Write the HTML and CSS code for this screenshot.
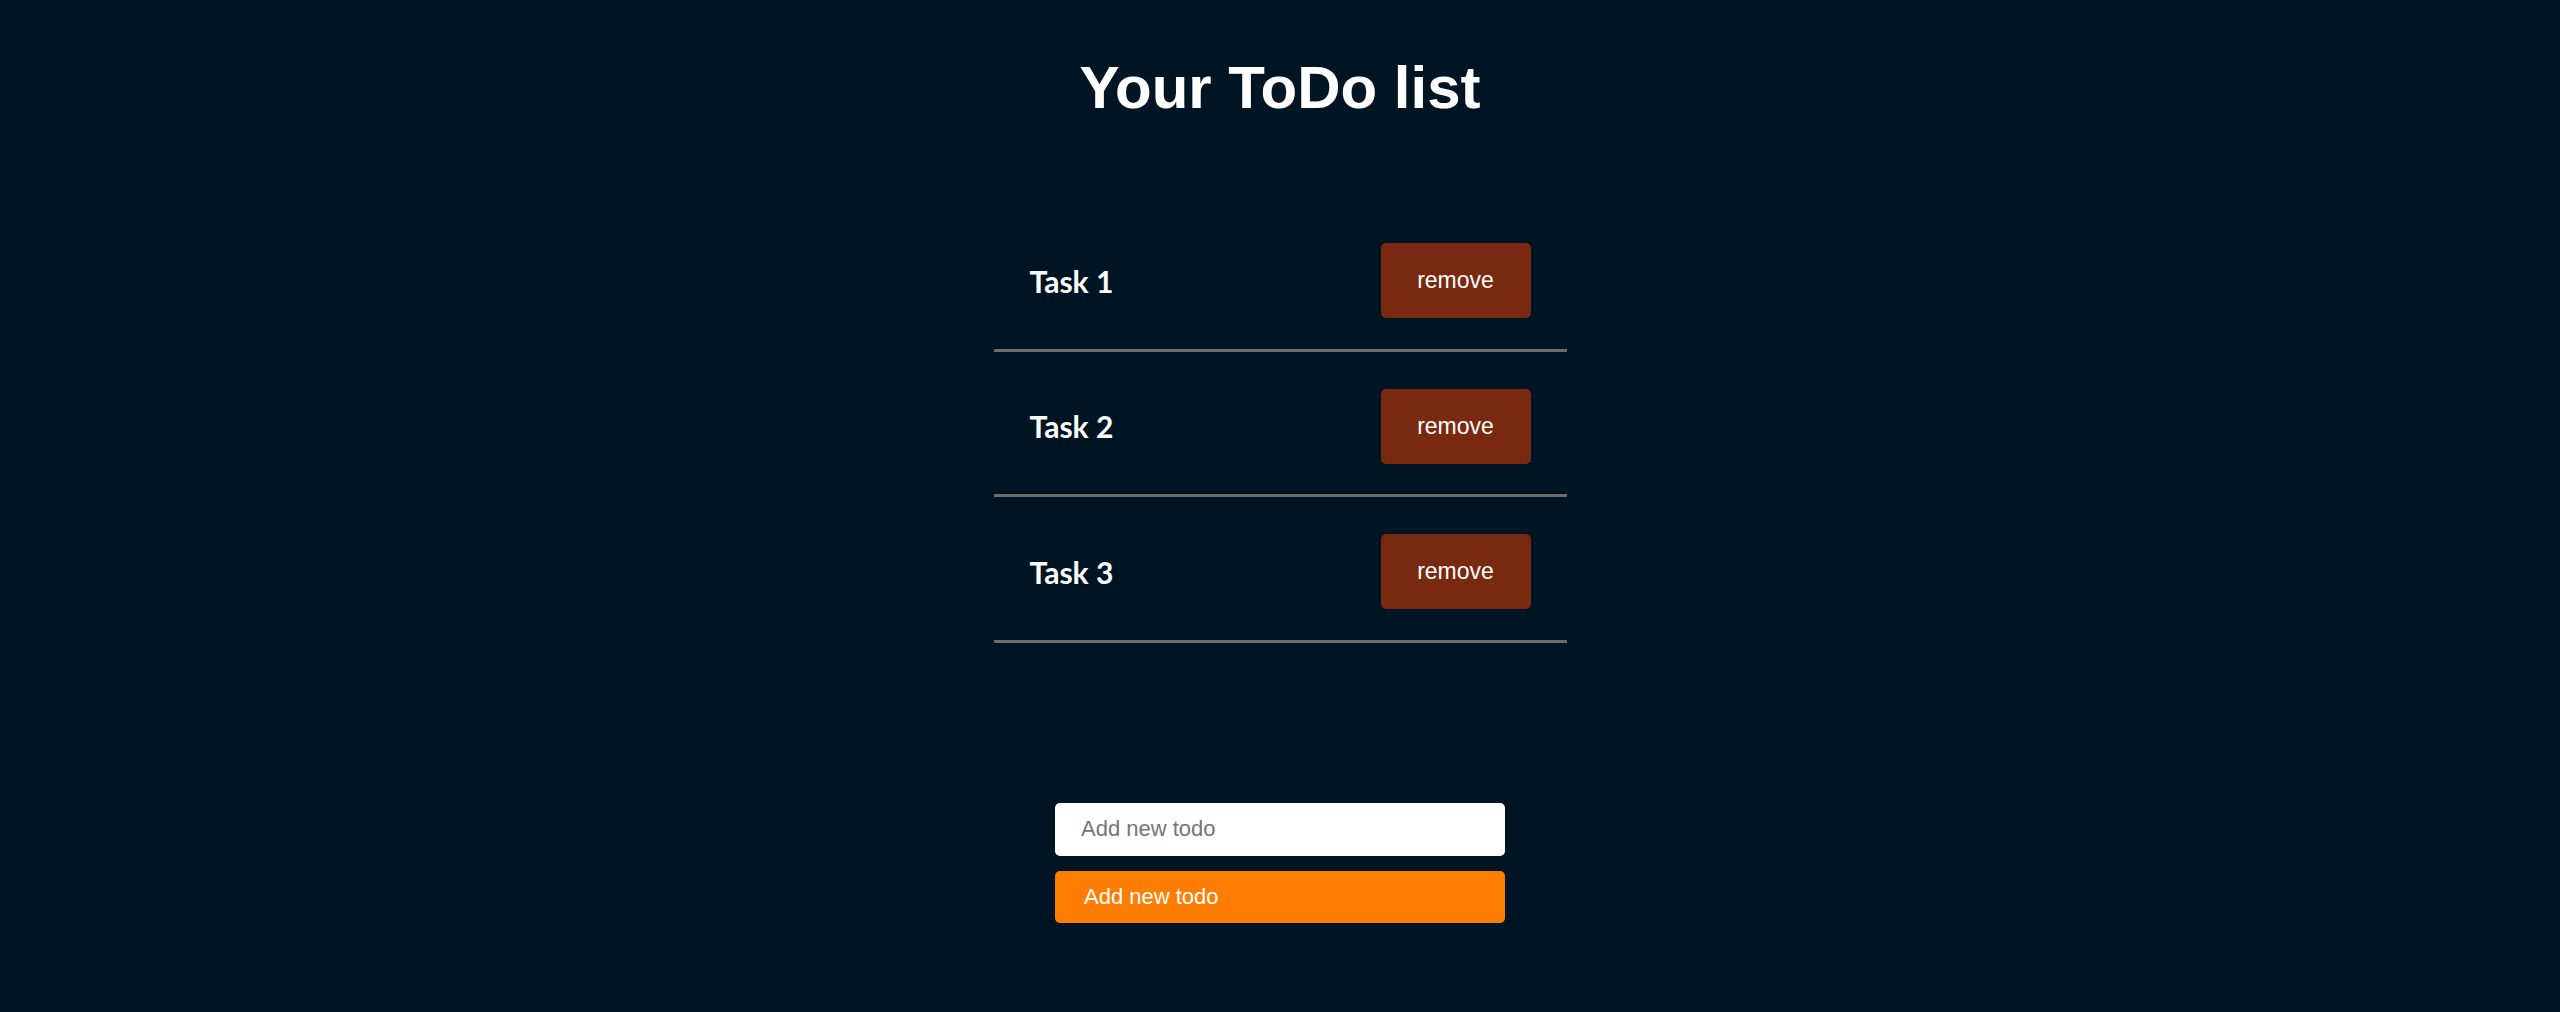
FILE: index.html
```html
<!DOCTYPE html>
<html lang="en">
<head>
<meta charset="utf-8">
<title>Your ToDo list</title>
<link rel="stylesheet" href="styles.css">
</head>
<body>
<main class="app">
  <h1 class="title">Your ToDo list</h1>
  <ul class="todo-list">
    <li class="todo-item"><span class="todo-text">Task 1</span><button class="remove-btn">remove</button></li>
    <li class="todo-item"><span class="todo-text">Task 2</span><button class="remove-btn">remove</button></li>
    <li class="todo-item"><span class="todo-text">Task 3</span><button class="remove-btn">remove</button></li>
  </ul>
  <form class="add-form">
    <input class="add-input" type="text" placeholder="Add new todo">
    <button class="add-btn" type="button">Add new todo</button>
  </form>
</main>
</body>
</html>
```
FILE: styles.css
```css
html, body {
  margin: 0;
  padding: 0;
  background: #001524;
  min-height: 100%;
}
body {
  font-family: "Liberation Sans", Arial, sans-serif;
  color: #ffffff;
}
.app {
  display: flex;
  flex-direction: column;
  align-items: center;
}
.title {
  margin: 53px 0 84px;
  font-family: "Liberation Sans", Arial, sans-serif;
  font-weight: 700;
  font-size: 60px;
  line-height: 69px;
  text-align: center;
}
.todo-list {
  list-style: none;
  margin: 0;
  padding: 0;
  width: 573px;
}
.todo-item {
  display: flex;
  align-items: center;
  justify-content: space-between;
  padding: 37px 36px 30.5px 36px;
  border-bottom: 3px solid #6c6c6c;
  height: 75px;
}
.todo-text {
  font-family: Lato, "Open Sans", sans-serif;
  font-weight: 700;
  font-size: 30px;
  line-height: 36px;
  color: #ffffff;
}
.remove-btn {
  width: 150px;
  height: 75px;
  border: none;
  border-radius: 5px;
  background: #78290f;
  color: #ffffff;
  font-family: "Liberation Sans", Arial, sans-serif;
  font-size: 23px;
  padding: 0;
  cursor: pointer;
}
.add-form {
  display: flex;
  flex-direction: column;
  gap: 15px;
  width: 450px;
  margin-top: 160px;
}
.add-input {
  box-sizing: border-box;
  height: 53px;
  width: 100%;
  border: none;
  border-radius: 5px;
  background: #ffffff;
  padding: 0 26px;
  font-family: "Liberation Sans", Arial, sans-serif;
  font-size: 22px;
  color: #222;
  outline: none;
}
.add-input::placeholder {
  color: #757575;
}
.add-btn {
  box-sizing: border-box;
  height: 52px;
  width: 100%;
  border: none;
  border-radius: 5px;
  background: #ff7d00;
  color: #ffffff;
  text-align: left;
  padding: 0 29px;
  font-family: "Liberation Sans", Arial, sans-serif;
  font-size: 22px;
  cursor: pointer;
}
```
